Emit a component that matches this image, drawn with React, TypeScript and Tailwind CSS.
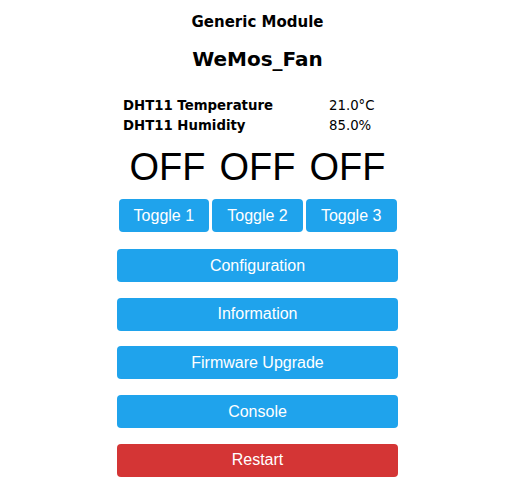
const BLUE = 'bg-[#1fa3ec]';

function Btn({ label, red }: { label: string; red?: boolean }) {
  return (
    <button
      type="button"
      className={`h-[33px] w-full rounded-[4px] text-[16px] text-white ${red ? 'bg-[#d43535]' : BLUE}`}
      style={{ fontFamily: '"Liberation Sans", Arial, sans-serif' }}
    >
      {label}
    </button>
  );
}

export default function App() {
  return (
    <div className="flex w-[515px] justify-center bg-white text-black">
      <div className="flex w-[281px] flex-col items-center pt-[12px]">
        <div className="font-['DejaVu_Sans',Verdana,sans-serif] text-[15px] font-bold leading-[20px]">
          Generic Module
        </div>
        <div className="mt-[14px] font-['DejaVu_Sans',Verdana,sans-serif] text-[20px] font-bold leading-[26px]">
          WeMos_Fan
        </div>
        <table className="mt-[24px] w-[269px] font-['DejaVu_Sans',Verdana,sans-serif] text-[13.3px] leading-[20px]">
          <tbody>
            <tr>
              <th className="w-[206px] text-left font-bold">DHT11 Temperature</th>
              <td className="text-left">21.0°C</td>
            </tr>
            <tr>
              <th className="text-left font-bold">DHT11 Humidity</th>
              <td className="text-left">85.0%</td>
            </tr>
          </tbody>
        </table>
        <div className="mt-[4px] grid w-[270px] grid-cols-3 font-['Liberation_Sans',Arial,sans-serif] text-[38px] leading-[54px]">
          <span className="text-center">OFF</span>
          <span className="text-center">OFF</span>
          <span className="text-center">OFF</span>
        </div>
        <div className="mt-[5px] flex w-[278px] gap-[3px]">
          <Btn label="Toggle 1" />
          <Btn label="Toggle 2" />
          <Btn label="Toggle 3" />
        </div>
        <div className="mt-[17px] flex w-full flex-col gap-[15.7px]">
          <Btn label="Configuration" />
          <Btn label="Information" />
          <Btn label="Firmware Upgrade" />
          <Btn label="Console" />
          <Btn label="Restart" red />
        </div>
      </div>
    </div>
  );
}
